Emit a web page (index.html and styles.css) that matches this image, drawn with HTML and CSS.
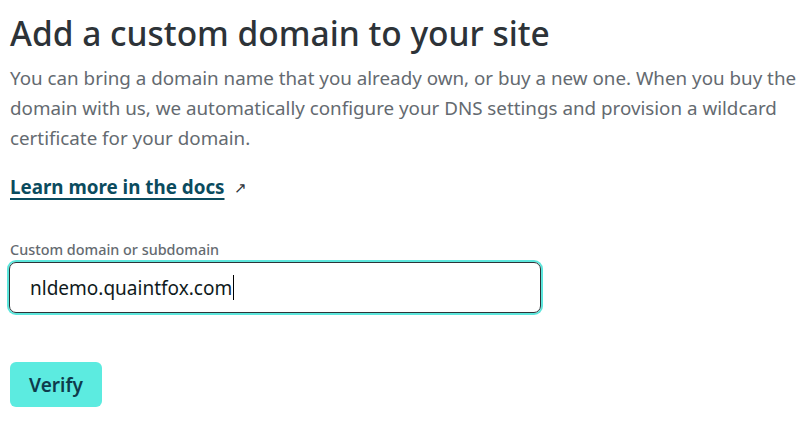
FILE: index.html
```html
<!DOCTYPE html>
<html lang="en">
<head>
<meta charset="utf-8">
<title>Add a custom domain</title>
<link rel="stylesheet" href="styles.css">
</head>
<body>
<main class="page">
  <h1 class="title">Add a custom domain to your site</h1>
  <p class="intro">You can bring a domain name that you already own, or buy a new one. When you buy the domain with us, we automatically configure your DNS settings and provision a wildcard certificate for your domain.</p>
  <p class="docs"><a class="docs-link" href="#">Learn more in the docs</a><span class="ext">↗</span></p>
  <form class="form">
    <label class="label" for="domain">Custom domain or subdomain</label>
    <div class="field">
      <span class="value">nldemo.quaintfox.com</span><span class="caret"></span>
    </div>
    <button class="btn" type="button">Verify</button>
  </form>
</main>
</body>
</html>
```

FILE: styles.css
```css
* { box-sizing: border-box; }
html, body { margin: 0; background: #fff; }
body {
  font-family: "Noto Sans", "Open Sans", sans-serif;
  color: #2d3338;
}
.page {
  padding: 11px 2px 0 10px;
  display: flex;
  flex-direction: column;
}
.title {
  margin: 0;
  font-size: 33.5px;
  line-height: 44px;
  font-weight: 500;
  color: #2d3338;
}
.intro {
  margin: 8px 0 0;
  font-size: 18.8px;
  line-height: 30px;
  color: #646a70;
}
.docs {
  margin: 19px 0 0;
  font-size: 18.8px;
  line-height: 30px;
  display: flex;
  align-items: center;
  gap: 9px;
}
.docs-link {
  color: #0b4b5e;
  font-weight: 700;
  text-decoration: underline;
  text-decoration-thickness: 2px;
  text-underline-offset: 4px;
}
.ext {
  color: #2d3338;
  font-size: 15px;
}
.form {
  margin-top: 39px;
  display: flex;
  flex-direction: column;
  align-items: flex-start;
}
.label {
  font-size: 14.4px;
  line-height: 18px;
  color: #646a70;
  font-weight: 500;
}
.field {
  margin-top: 3px;
  width: 532px;
  height: 51px;
  margin-left: -1px;
  border: 1px solid #2d3338;
  border-radius: 7px;
  box-shadow: 0 0 0 2px #5ce6dc;
  display: flex;
  align-items: center;
  padding-left: 20px;
  font-size: 19px;
  color: #0f1a20;
}
.caret {
  display: inline-block;
  width: 1px;
  height: 25px;
  background: #000;
  margin-left: 1px;
}
.btn {
  margin-top: 49px;
  width: 92px;
  height: 45px;
  border: 0;
  border-radius: 6px;
  background: #5cebe0;
  color: #0e3b4c;
  font-family: inherit;
  font-size: 19px;
  font-weight: 600;
}
```
